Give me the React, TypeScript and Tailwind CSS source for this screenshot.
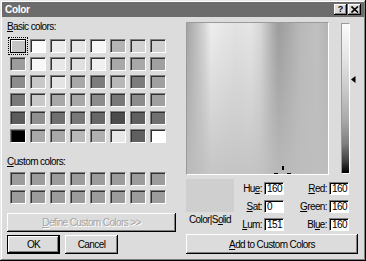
import React from "react";

const raised =
  "bg-[#dcdcdc] shadow-[inset_-1px_-1px_#000,inset_1px_1px_#fff,inset_-2px_-2px_#808080]";

const basic: string[][] = [
  ["bg-[#c4c4c4]", "bg-[#fafafa]", "bg-[#ececec]", "bg-[#e6e6e6]", "bg-[#f6f6f6]", "bg-[#b4b4b4]", "bg-[#d2d2d2]", "bg-[#d0d0d0]"],
  ["bg-[#9c9c9c]", "bg-[#f8f8f8]", "bg-[#e8e8e8]", "bg-[#e0e0e0]", "bg-[#f0f0f0]", "bg-[#a8a8a8]", "bg-[#a8a8a8]", "bg-[#a0a0a0]"],
  ["bg-[#8c8c8c]", "bg-[#c8c8c8]", "bg-[#e4e4e4]", "bg-[#a8a8a8]", "bg-[#7c7c7c]", "bg-[#b8b8b8]", "bg-[#7c7c7c]", "bg-[#a0a0a0]"],
  ["bg-[#7a7a7a]", "bg-[#c8c8c8]", "bg-[#a8a8a8]", "bg-[#a8a8a8]", "bg-[#8c8c8c]", "bg-[#787878]", "bg-[#8c8c8c]", "bg-[#a0a0a0]"],
  ["bg-[#5c5c5c]", "bg-[#909090]", "bg-[#707070]", "bg-[#787878]", "bg-[#686868]", "bg-[#4c4c4c]", "bg-[#606060]", "bg-[#707070]"],
  ["bg-[#000000]", "bg-[#a8a8a8]", "bg-[#a8a8a8]", "bg-[#b8b8b8]", "bg-[#b0b0b0]", "bg-[#e8e8e8]", "bg-[#606060]", "bg-[#ffffff]"],
];

function Swatch({ c, sel }: { c: string; sel?: boolean }) {
  if (sel) {
    return (
      <div className="w-[16px] h-[14px] outline-1 outline-dotted outline-black outline-offset-[1px]">
        <div className={"w-[16px] h-[14px] border border-black shadow-[inset_1px_1px_#fff] " + c} />
      </div>
    );
  }
  return (
    <div
      className={
        "w-[16px] h-[14px] border border-t-[#808080] border-l-[#808080] border-b-white border-r-white shadow-[inset_1px_1px_#303030] " +
        c
      }
    />
  );
}

function Field({ v }: { v: string }) {
  return (
    <div className="h-[13px] w-[20px] bg-white border border-t-[#808080] border-l-[#808080] border-b-white border-r-white shadow-[inset_1px_1px_#000] pl-[2px] leading-[12px] text-[10px]">
      {v}
    </div>
  );
}

function Label({ children }: { children: React.ReactNode }) {
  return <div className="h-[13px] leading-[13px] text-right">{children}</div>;
}

export default function App() {
  return (
    <div className="w-[366px] h-[261px] bg-[#dcdcdc] font-['Liberation_Sans',Arial,sans-serif] text-[10px] tracking-[-0.6px] text-black p-[2px] shadow-[inset_-1px_-1px_#000,inset_1px_1px_#e8e8e8,inset_-2px_-2px_#808080,inset_2px_2px_#fff] flex flex-col overflow-hidden">
      {/* Title bar */}
      <div className="h-[15px] shrink-0 bg-[#6c6c6c] flex items-center justify-between pl-[3px] pr-[3px]">
        <span className="font-bold text-white text-[10px] leading-[15px] tracking-[-0.3px]">Color</span>
        <div className="flex gap-[1px]">
          <div className={raised + " w-[13px] h-[11px] flex items-center justify-center font-bold text-[9px] leading-[11px] tracking-normal"}>
            ?
          </div>
          <div className={raised + " w-[13px] h-[11px] flex items-center justify-center"}>
            <svg width="8" height="7" viewBox="0 0 8 7">
              <path d="M0.5 0.5 L7 6.5 M7 0.5 L0.5 6.5" stroke="#000" strokeWidth="1.6" />
            </svg>
          </div>
        </div>
      </div>

      {/* Body */}
      <div className="flex pl-[5px] pr-[6px]">
        {/* Left column */}
        <div className="w-[169px] flex flex-col pt-[4px]">
          <div className="h-[12px] leading-[12px]">
            <u>B</u>asic colors:
          </div>
          <div className="mt-[6px] ml-[3px] grid grid-cols-[repeat(8,16px)] gap-[4px]">
            {basic.map((row, ri) =>
              row.map((c, ci) => <Swatch key={ri + "-" + ci} c={c} sel={ri === 0 && ci === 0} />)
            )}
          </div>
          <div className="mt-[13px] h-[12px] leading-[12px]">
            <u>C</u>ustom colors:
          </div>
          <div className="mt-[4px] ml-[3px] grid grid-cols-[repeat(8,16px)] gap-[4px]">
            {Array.from({ length: 16 }).map((_, i) => (
              <Swatch key={i} c="bg-[#9c9c9c]" />
            ))}
          </div>
          <div className={raised + " mt-[9px] h-[19px] flex items-center justify-center text-[#a4a4a4] [text-shadow:1px_1px_#fff]"}>
            <span>
              <u>D</u>efine Custom Colors &gt;&gt;
            </span>
          </div>
          <div className="mt-[3px] flex gap-[5px]">
            <div className="w-[53px] h-[19px] border border-black">
              <div className={raised + " w-full h-full flex items-center justify-center"}>OK</div>
            </div>
            <div className={raised + " w-[53px] h-[19px] flex items-center justify-center"}>Cancel</div>
          </div>
        </div>

        {/* Right column */}
        <div className="ml-[10px] w-[172px] flex flex-col pt-[5px]">
          <div className="flex">
            <div className="relative w-[143px] h-[153px] overflow-hidden border border-t-[#9a9a9a] border-l-[#9a9a9a] border-b-white border-r-white bg-[linear-gradient(to_right,#a4a4a4_0%,#b8b8b8_5%,#d4d4d4_12%,#eeeeee_17%,#e8e8e8_25%,#e2e2e2_35%,#e6e6e6_45%,#d8d8d8_52%,#b0b0b0_60%,#9c9c9c_65%,#a8a8a8_72%,#b8b8b8_80%,#c0c0c0_92%,#b4b4b4_100%)]">
              <div className="absolute inset-0 bg-[linear-gradient(to_bottom,rgba(190,190,190,0),rgba(190,190,190,0.85))]" />
              <div className="absolute left-[95px] top-[143px] w-[2px] h-[4px] bg-black" />
              <div className="absolute left-[87px] top-[150px] w-[4px] h-[2px] bg-black" />
              <div className="absolute left-[100px] top-[150px] w-[4px] h-[2px] bg-black" />
            </div>
            <div className="ml-[12px] mt-[1px] w-[9px] h-[151px] border border-t-[#9a9a9a] border-l-[#9a9a9a] border-b-white border-r-white bg-[linear-gradient(to_bottom,#fafafa,#e8e8e8_20%,#c8c8c8_45%,#a8a8a8_65%,#808080_80%,#404040_92%,#000)]" />
            <div className="ml-[1px] mt-[54px]">
              <svg width="5" height="7" viewBox="0 0 5 7">
                <path d="M0 3.5 L4.5 0 L4.5 7 Z" fill="#000" />
              </svg>
            </div>
          </div>

          <div className="mt-[4px] flex">
            <div className="w-[48px] flex flex-col">
              <div className="h-[33px] bg-[#cfcfcf]" />
              <div className="mt-[2px] h-[12px] leading-[12px] text-center">
                Color|S<u>o</u>lid
              </div>
            </div>
            <div className="pt-[3px] grid grid-cols-[28px_20px_41px_20px] gap-x-[2px] gap-y-[5px]">
              <Label>
                Hu<u>e</u>:
              </Label>
              <Field v="160" />
              <Label>
                <u>R</u>ed:
              </Label>
              <Field v="160" />
              <Label>
                <u>S</u>at:
              </Label>
              <Field v="0" />
              <Label>
                <u>G</u>reen:
              </Label>
              <Field v="160" />
              <Label>
                <u>L</u>um:
              </Label>
              <Field v="151" />
              <Label>
                Bl<u>u</u>e:
              </Label>
              <Field v="160" />
            </div>
          </div>

          <div className={raised + " mt-[3px] h-[20px] flex items-center justify-center"}>
            <span>
              <u>A</u>dd to Custom Colors
            </span>
          </div>
        </div>
      </div>
    </div>
  );
}
